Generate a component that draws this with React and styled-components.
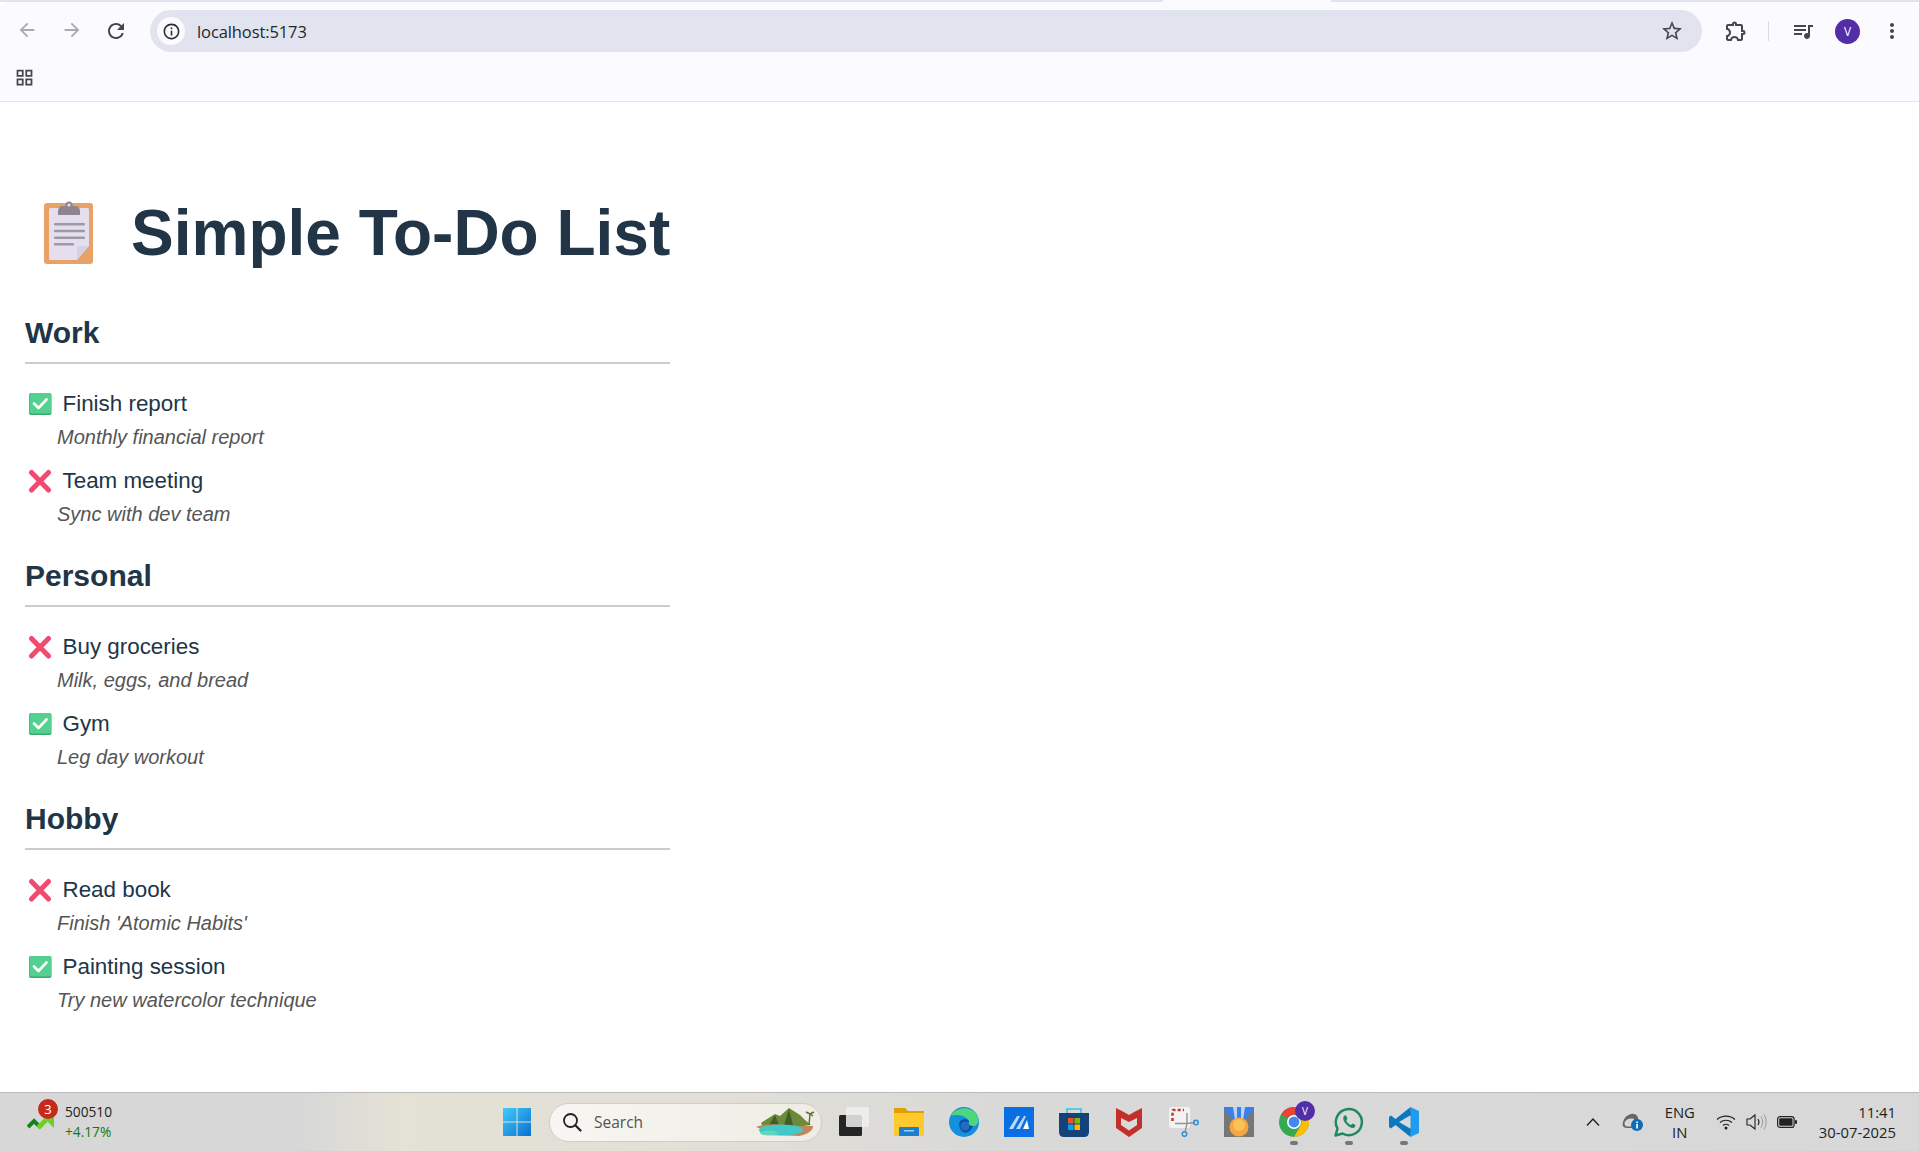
import React from "react";
import styled, { createGlobalStyle } from "styled-components";
import {
  MdArrowBack,
  MdArrowForward,
  MdRefresh,
  MdInfoOutline,
  MdStarBorder,
  MdOutlineExtension,
  MdQueueMusic,
  MdMoreVert,
  MdOutlineGridView,
} from "react-icons/md";

const GlobalStyle = createGlobalStyle`
  html, body { margin: 0; padding: 0; background: #fff; }
  body { font-family: "Liberation Sans", Arial, sans-serif; color: #213547; }
`;

const Screen = styled.div`
  height: 1151px;
  display: flex;
  flex-direction: column;
  overflow: hidden;
`;

/* browser chrome */
const TabStrip = styled.div`
  height: 2px;
  background: linear-gradient(90deg, #e1e4ef 0 1163px, #fafaff 1163px 1331px, #e1e4ef 1331px);
`;
const Toolbar = styled.div`
  height: 58px;
  background: #fafaff;
  border-radius: 8px 8px 0 0;
  display: flex;
  align-items: center;
  position: relative;
`;
const NavBtn = styled.span`
  width: 44.5px;
  display: flex;
  justify-content: center;
  color: ${(p) => (p.$off ? "#a9abb3" : "#44474f")};
  font-size: ${(p) => p.$size || 22}px;
`;
const NavGroup = styled.div`
  display: flex;
  padding-left: 5px;
  width: 150px;
  box-sizing: border-box;
`;
const AddressBar = styled.div`
  width: 1552px;
  height: 42px;
  border-radius: 21px;
  background: #e1e4ef;
  display: flex;
  align-items: center;
  padding: 0 18px 0 7px;
  box-sizing: border-box;
`;
const InfoChip = styled.span`
  width: 28px;
  height: 28px;
  border-radius: 50%;
  background: #fafaff;
  display: flex;
  align-items: center;
  justify-content: center;
  font-size: 19px;
  color: #2a2c31;
`;
const UrlText = styled.span`
  font-family: "Open Sans", sans-serif;
  font-size: 16.5px;
  color: #24262b;
  margin-left: 12px;
  letter-spacing: -0.1px;
  flex: 1;
`;
const StarBtn = styled.span`
  font-size: 24px;
  color: #44474f;
  display: flex;
`;
const ToolIcons = styled.div`
  display: flex;
  align-items: center;
  font-size: 24px;
  color: #44474f;
  flex: 1;
  padding-left: 22px;
  svg { display: block; }
`;
const ToolSep = styled.span`
  width: 1px;
  height: 20px;
  background: #d3dcf0;
  margin: 0 22px 0 20px;
`;
const Avatar = styled.span`
  width: 25px;
  height: 25px;
  border-radius: 50%;
  background: #512da8;
  color: #fff;
  font-family: "Open Sans", sans-serif;
  font-size: 12px;
  display: flex;
  align-items: center;
  justify-content: center;
  margin: 0 20px 0 20px;
`;
const BookmarkBar = styled.div`
  height: 42px;
  box-sizing: border-box;
  background: #fafaff;
  border-bottom: 1px solid #e4e5ec;
  padding: 0 0 6px 14px;
  display: flex;
  align-items: center;
  font-size: 21px;
  color: #44474f;
`;

/* page */
const Main = styled.main`
  flex: 1;
  padding: 94px 0 0 25px;
`;
const Column = styled.div`
  width: 645px;
`;
const Title = styled.h1`
  margin: 0 0 46px;
  font-size: 64px;
  line-height: 74px;
  font-weight: 700;
  color: #213547;
  display: flex;
  align-items: center;
  white-space: nowrap;
`;
const TitleIcon = styled.svg`
  width: 64px;
  height: 64px;
  margin: -2px 31px 0 11px;
  flex: none;
`;
const Section = styled.section`
  margin-bottom: 35.5px;
`;
const SectionName = styled.h2`
  margin: 0;
  font-size: 30px;
  line-height: 34px;
  font-weight: 700;
  color: #213547;
  padding-bottom: 12px;
  border-bottom: 2px solid #ccc;
`;
const TaskList = styled.ul`
  list-style: none;
  margin: 27px 0 0;
  padding: 0;
  display: flex;
  flex-direction: column;
  gap: 20.5px;
`;
const TaskRow = styled.li`
  display: block;
`;
const TaskTitle = styled.div`
  display: flex;
  align-items: center;
  gap: 10.5px;
  font-size: 22.4px;
  line-height: 26px;
  color: #213547;
  padding-left: 3px;
`;
const TaskNote = styled.div`
  margin: 10px 0 0 32px;
  font-size: 20px;
  line-height: 20px;
  font-style: italic;
  color: #555;
`;

/* taskbar */
const Taskbar = styled.footer`
  height: 59px;
  box-sizing: border-box;
  border-top: 1px solid #b9b9b9;
  background: linear-gradient(90deg, #d7d7d7 0 300px, #e4e1d5 400px, #e1dfd7 720px, #d9d9d8 1000px, #d8d8d8);
  display: grid;
  grid-template-columns: 502px auto 1fr;
  align-items: center;
  position: relative;
`;
const Widget = styled.div`
  display: flex;
  align-items: center;
  padding-left: 27px;
  gap: 10px;
  position: relative;
  font-family: "Open Sans", sans-serif;
  font-size: 13.7px;
  line-height: 20px;
  color: #222;
`;
const WidgetBadge = styled.span`
  position: absolute;
  left: 38px;
  top: -3px;
  width: 20px;
  height: 20px;
  border-radius: 50%;
  background: #c42b1c;
  color: #fff;
  font-size: 13px;
  display: flex;
  align-items: center;
  justify-content: center;
`;
const Gain = styled.div`
  color: #117a11;
`;
const Tray = styled.div`
  display: flex;
  align-items: center;
  gap: 25px;
`;
const AppIcon = styled.span`
  width: 30px;
  height: 30px;
  display: block;
  position: relative;
  svg { display: block; }
  &::after {
    content: "";
    display: ${(p) => (p.$running ? "block" : "none")};
    position: absolute;
    left: 11px;
    bottom: -8px;
    width: 8px;
    height: 4px;
    border-radius: 2px;
    background: #777;
  }
`;
const SearchPill = styled.div`
  width: 273px;
  height: 39px;
  box-sizing: border-box;
  margin: 0 -8px 0 -8px;
  border-radius: 20px;
  border: 1px solid #cfcdc4;
  background: linear-gradient(90deg, #f7f6f2, #eeece4);
  display: flex;
  align-items: center;
  padding: 0 4px 0 12px;
  font-family: "Open Sans", sans-serif;
  font-size: 15.5px;
  color: #555;
`;
const SearchLabel = styled.span`
  flex: 1;
  margin-left: 12px;
`;
const SystemTray = styled.div`
  display: flex;
  align-items: center;
  justify-content: flex-end;
  padding-right: 23px;
  font-family: "Open Sans", sans-serif;
  font-size: 14.8px;
  color: #222;
  svg { display: block; }
`;
const Lang = styled.div`
  text-align: center;
  line-height: 20px;
  margin: 0 21px 0 21px;
`;
const Clock = styled.div`
  text-align: right;
  line-height: 20px;
  margin-left: 22px;
`;
const TrayGap = styled.span`
  display: block;
  margin-left: ${(p) => p.$left || 0}px;
`;

const sections = [
  { name: "Work", tasks: [
    { title: "Finish report", note: "Monthly financial report", done: true },
    { title: "Team meeting", note: "Sync with dev team", done: false },
  ] },
  { name: "Personal", tasks: [
    { title: "Buy groceries", note: "Milk, eggs, and bread", done: false },
    { title: "Gym", note: "Leg day workout", done: true },
  ] },
  { name: "Hobby", tasks: [
    { title: "Read book", note: "Finish 'Atomic Habits'", done: false },
    { title: "Painting session", note: "Try new watercolor technique", done: true },
  ] },
];

const ClipboardIcon = () => (
  <TitleIcon viewBox="0 0 64 64">
    <rect x="8" y="3" width="49" height="61" rx="3" fill="#e8a263" />
    <rect x="13" y="8" width="40" height="52" rx="1.5" fill="#e4deef" />
    <path d="M41 60 L53 46 L53 58.5 Q53 60 51.5 60 Z" fill="#e8a263" />
    <path d="M41 60 L41 49 Q41 46 44 46 L53 46 Z" fill="#d5d0e2" />
    <path d="M22 12 Q22 6.500 26 6 L29 6 Q29.500 1.500 33 1.500 Q36.500 1.500 37 6 L40 6 Q44 6.500 44 12 L44 15 L22 15 Z" fill="#8e8590" />
    <circle cx="33" cy="5" r="1.6" fill="#e4deef" />
    <rect x="18" y="23" width="31" height="2.500" rx="1" fill="#9d97a6" />
    <rect x="18" y="29.700" width="31" height="2.500" rx="1" fill="#9d97a6" />
    <rect x="18" y="36.400" width="31" height="2.500" rx="1" fill="#9d97a6" />
    <rect x="18" y="43.100" width="20" height="2.500" rx="1" fill="#9d97a6" />
  </TitleIcon>
);

const StatusIcon = ({ done }) =>
  done ? (
    <svg width="24" height="24" viewBox="0 0 24 24" style={{ flex: "none" }}>
      <rect x="1" y="1" width="22.500" height="22" rx="2" fill="#3fa873" />
      <rect x="1.500" y="1" width="21.500" height="20.500" rx="2" fill="#54d18f" />
      <path d="M6 11.500 L10.500 16 L18.500 7.500" fill="none" stroke="#fff" strokeWidth="2.600" strokeLinecap="round" strokeLinejoin="round" />
    </svg>
  ) : (
    <svg width="24" height="24" viewBox="0 0 24 24" style={{ flex: "none" }}>
      <path d="M3.500 3.500 L20.500 21 M20.500 3.500 L3.500 21" stroke="#f2496f" strokeWidth="5" strokeLinecap="round" />
    </svg>
  );

const Task = ({ title, note, done }) => (
  <TaskRow>
    <TaskTitle>
      <StatusIcon done={done} />
      {title}
    </TaskTitle>
    <TaskNote>{note}</TaskNote>
  </TaskRow>
);

const StartIcon = () => (
  <svg width="30" height="30" viewBox="0 0 30 30">
    <defs>
      <linearGradient id="win" x1="0" y1="0" x2="1" y2="1">
        <stop offset="0" stopColor="#3fcdfb" />
        <stop offset="1" stopColor="#0b6fd0" />
      </linearGradient>
    </defs>
    <path d="M1 1 H14.500 V14.500 H1 Z M15.500 1 H29 V14.500 H15.500 Z M1 15.500 H14.500 V29 H1 Z M15.500 15.500 H29 V29 H15.500 Z" fill="url(#win)" />
  </svg>
);
const TaskViewIcon = () => (
  <svg width="30" height="30" viewBox="0 0 30 30">
    <rect x="0" y="8" width="23" height="21" rx="1.500" fill="#252525" />
    <rect x="7" y="0" width="23" height="20" rx="1.500" fill="#f0f0ee" fillOpacity="0.85" />
  </svg>
);
const FolderIcon = () => (
  <svg width="30" height="30" viewBox="0 0 30 30">
    <path d="M0 2 Q0 1 1 1 H11 L14 4 H30 V10 H0 Z" fill="#e0a100" />
    <path d="M0 6 H30 V29 H0 Z" fill="#fdc92f" />
    <rect x="5" y="20" width="20" height="9" rx="1" fill="#1b7fd0" />
    <rect x="10" y="23" width="10" height="1.500" fill="#fff" fillOpacity="0.6" />
  </svg>
);
const EdgeIcon = () => (
  <svg width="30" height="30" viewBox="0 0 30 30">
    <circle cx="15" cy="15" r="15" fill="#1490df" />
    <path d="M2 9 C6 0 22 -2 28 8 C31 13 29 19 24 19 C19 19 19 16 20 14 C17 8 7 7 2 9 Z" fill="#4fd67a" />
    <path d="M10 18 C10 12 17 10 20 14 C19 16 19 19 24 19 C20 28 12 28 10 18 Z" fill="#0b4f9e" />
    <circle cx="16" cy="19" r="4.500" fill="#1c6fc4" />
  </svg>
);
const AppTileIcon = () => (
  <svg width="30" height="30" viewBox="0 0 30 30">
    <rect width="30" height="30" fill="#0a6fe3" />
    <path d="M5 22 L13 9 H16 L9 22 Z M12 22 L20 9 H22 L16 22 Z" fill="#bcd9f8" />
    <path d="M19 22 L23 13 L25 22 Z" fill="#fff" />
  </svg>
);
const StoreIcon = () => (
  <svg width="30" height="30" viewBox="0 0 30 30">
    <path d="M8 7 V2 H22 V7" fill="none" stroke="#35c1ee" strokeWidth="1.600" />
    <path d="M0 6 H30 V25 Q30 30 25 30 H5 Q0 30 0 25 Z" fill="#14427a" />
    <rect x="9" y="11" width="5.500" height="5.500" fill="#f25022" />
    <rect x="15.500" y="11" width="5.500" height="5.500" fill="#7fba00" />
    <rect x="9" y="17.500" width="5.500" height="5.500" fill="#00a4ef" />
    <rect x="15.500" y="17.500" width="5.500" height="5.500" fill="#ffb900" />
  </svg>
);
const ShieldIcon = () => (
  <svg width="30" height="30" viewBox="0 0 30 30">
    <path d="M2 1 L9 4.500 L15 8 L21 4.500 L28 1 V21 L15 30 L2 21 Z M7 11 V18 L15 23.500 L23 18 V11 L15 15 Z" fill="#c3302a" fillRule="evenodd" />
  </svg>
);
const SnipIcon = () => (
  <svg width="30" height="30" viewBox="0 0 30 30">
    <rect x="0" y="0" width="21" height="21" rx="3" fill="#f2f2f2" />
    <path d="M3.500 14 V4 Q3.500 3 4.500 3 H15" fill="none" stroke="#c8361f" strokeWidth="2.500" strokeDasharray="3 2.200" />
    <path d="M6 16.500 H18 L26 15.500 M18 6 V17 L16 25" fill="none" stroke="#8f9498" strokeWidth="1.400" />
    <circle cx="27" cy="15.500" r="2.300" fill="none" stroke="#2d8fd6" strokeWidth="1.500" />
    <circle cx="15.500" cy="27" r="2.300" fill="none" stroke="#2d8fd6" strokeWidth="1.500" />
  </svg>
);
const MedalIcon = () => (
  <svg width="30" height="30" viewBox="0 0 30 30">
    <rect width="30" height="30" fill="#777" />
    <path d="M0 0 H30 V3 L20 14 H10 L0 3 Z" fill="#3d7fe6" />
    <path d="M9 0 H13 V13 H11 Z M17 0 H21 L19 13 H17 Z" fill="#b8d4fb" />
    <circle cx="15" cy="20" r="9.500" fill="#f6a63c" />
    <circle cx="15" cy="18" r="6" fill="#fbc25a" />
  </svg>
);
const ChromeIcon = () => (
  <svg width="30" height="30" viewBox="0 0 30 30">
    <circle cx="15" cy="15" r="15" fill="#34a853" />
    <path d="M15 0 A15 15 0 0 1 28 7.500 L15 7.500 A7.500 7.500 0 0 0 8.500 11.200 L2 7.500 A15 15 0 0 1 15 0 Z" fill="#ea4335" />
    <path d="M28 7.500 A15 15 0 0 1 15 30 L21.500 18.750 A7.500 7.500 0 0 0 21.500 11.200 Z" fill="#fbbc04" />
    <circle cx="15" cy="15" r="7" fill="#fff" />
    <circle cx="15" cy="15" r="5.400" fill="#4285f4" />
  </svg>
);
const ProfileDot = styled.span`
  position: absolute;
  right: -6px;
  top: -6px;
  width: 20px;
  height: 20px;
  border-radius: 50%;
  background: #512da8;
  color: #fff;
  font-family: "Open Sans", sans-serif;
  font-size: 10px;
  display: flex;
  align-items: center;
  justify-content: center;
`;
const WhatsAppIcon = () => (
  <svg width="30" height="30" viewBox="0 0 30 30">
    <path d="M1.500 28.500 L3.500 21.500 A13 13 0 1 1 8.500 26.500 Z" fill="none" stroke="#1f8a5b" strokeWidth="2.500" strokeLinejoin="round" />
    <path d="M10.500 8.500 C8.500 10 9 13.500 12 17 C15 20.500 19 22 21 20 L21.500 18 L18.500 16.500 L17 18 C15 17.500 12.800 15 12.300 13.200 L13.500 11.800 L12.200 8.500 Z" fill="#1f8a5b" />
  </svg>
);
const VSCodeIcon = () => (
  <svg width="30" height="30" viewBox="0 0 30 30">
    <path d="M21.500 0 L30 4 V26 L21.500 30 Z" fill="#1f9cf0" />
    <path d="M21.500 0 L22 8 L10 15 L22 22 L21.500 30 L6.500 18 L2 21.500 L0 20 V10 L2 8.500 L6.500 12 Z" fill="#0a77c0" />
  </svg>
);
const IslandArt = () => (
  <svg width="62" height="30" viewBox="0 0 62 30">
    <path d="M6 16 L20 7 L25 9 L34 1 L45 8 L50 13 L56 18 L40 20 L8 20 Z" fill="#6c8a3a" />
    <path d="M20 8 L24 18 L14 18 Z M34 2 L38 18 L29 18 Z" fill="#3f5f2a" />
    <path d="M54 18 L55 7 M55 7 L51 5 M55 7 L59 5 M55 7 L58 9" stroke="#5d6f2a" strokeWidth="1.400" fill="none" />
    <path d="M1 20 Q14 15 40 19 Q52 19 58 19 Q58 26 44 29 L22 28 Z" fill="#c0875a" />
    <ellipse cx="26" cy="23" rx="22" ry="5.500" fill="#44c7c9" />
    <ellipse cx="14" cy="26" rx="9" ry="2.500" fill="#62d7bd" />
  </svg>
);
const CloudInfoIcon = () => (
  <svg width="22" height="20" viewBox="0 0 22 20">
    <path d="M5 16 C1 16 0 13 1 10 C2 7 3 4 9 2 C14 1 17 5 16 9 L11 16 Z" fill="#666" />
    <path d="M5 14.500 C2.500 14 2 11.500 3 9.500 C5 7 8 6 12 7 L10 14.500 Z" fill="#d8d8d8" />
    <circle cx="15" cy="13" r="6" fill="#0f6cbd" />
    <rect x="14.200" y="12" width="1.700" height="4.500" fill="#fff" />
    <rect x="14.200" y="9.500" width="1.700" height="1.700" fill="#fff" />
  </svg>
);
const ChevronIcon = () => (
  <svg width="16" height="10" viewBox="0 0 16 10">
    <path d="M2 8.500 L8 2 L14 8.500" fill="none" stroke="#222" strokeWidth="1.400" />
  </svg>
);
const WifiIcon = () => (
  <svg width="20" height="16" viewBox="0 0 20 16">
    <path d="M1 5.500 C6 1 14 1 19 5.500 M4 8.500 C7.500 5.500 12.500 5.500 16 8.500 M7 11.500 C8.800 10 11.200 10 13 11.500" fill="none" stroke="#222" strokeWidth="1.200" />
    <circle cx="10" cy="14" r="1.500" fill="#222" />
  </svg>
);
const SpeakerIcon = () => (
  <svg width="21" height="18" viewBox="0 0 21 18">
    <path d="M1 6 H4 L9 2 V16 L4 12 H1 Z" fill="none" stroke="#222" strokeWidth="1.100" />
    <path d="M12 6 Q14 9 12 12" fill="none" stroke="#222" strokeWidth="1.100" />
    <path d="M15 3.500 Q18.500 9 15 14.500 M18 1.500 Q22.500 9 18 16.500" fill="none" stroke="#999" strokeWidth="1" />
  </svg>
);
const BatteryIcon = () => (
  <svg width="20" height="12" viewBox="0 0 20 12">
    <rect x="0.600" y="0.600" width="16.500" height="10.800" rx="2.500" fill="none" stroke="#222" strokeWidth="1.200" />
    <rect x="2.200" y="2.200" width="13.300" height="7.600" rx="1.200" fill="#222" />
    <rect x="18" y="4" width="2" height="4" rx="1" fill="#222" />
  </svg>
);
const SearchGlass = () => (
  <svg width="20" height="20" viewBox="0 0 20 20">
    <circle cx="8.500" cy="8.500" r="6.500" fill="none" stroke="#222" strokeWidth="1.800" />
    <path d="M13.300 13.300 L18.500 18.500" stroke="#222" strokeWidth="2.200" strokeLinecap="round" />
  </svg>
);
const TrendIcon = () => (
  <svg width="28" height="17" viewBox="0 0 28 17">
    <path d="M1 13 L7 7 L12 12" fill="none" stroke="#17821b" strokeWidth="4" />
    <path d="M11 14 L19 6" fill="none" stroke="#6ecf28" strokeWidth="5" />
    <path d="M14 1 H27 V14 Z" fill="#6ecf28" />
  </svg>
);

export default function App() {
  return (
    <Screen>
      <GlobalStyle />
      <TabStrip />
      <Toolbar>
        <NavGroup>
          <NavBtn $off><MdArrowBack /></NavBtn>
          <NavBtn $off><MdArrowForward /></NavBtn>
          <NavBtn $size={24}><MdRefresh /></NavBtn>
        </NavGroup>
        <AddressBar>
          <InfoChip><MdInfoOutline /></InfoChip>
          <UrlText>localhost:5173</UrlText>
          <StarBtn><MdStarBorder /></StarBtn>
        </AddressBar>
        <ToolIcons>
          <MdOutlineExtension />
          <ToolSep />
          <MdQueueMusic />
          <Avatar>V</Avatar>
          <MdMoreVert />
        </ToolIcons>
      </Toolbar>
      <BookmarkBar><MdOutlineGridView /></BookmarkBar>

      <Main>
        <Column>
          <Title><ClipboardIcon />Simple To-Do List</Title>
          {sections.map((s) => (
            <Section key={s.name}>
              <SectionName>{s.name}</SectionName>
              <TaskList>
                {s.tasks.map((t) => <Task key={t.title} {...t} />)}
              </TaskList>
            </Section>
          ))}
        </Column>
      </Main>

      <Taskbar>
        <Widget>
          <TrendIcon />
          <WidgetBadge>3</WidgetBadge>
          <div>
            <div>500510</div>
            <Gain>+4.17%</Gain>
          </div>
        </Widget>
        <Tray>
          <AppIcon><StartIcon /></AppIcon>
          <SearchPill>
            <SearchGlass />
            <SearchLabel>Search</SearchLabel>
            <IslandArt />
          </SearchPill>
          <AppIcon><TaskViewIcon /></AppIcon>
          <AppIcon><FolderIcon /></AppIcon>
          <AppIcon><EdgeIcon /></AppIcon>
          <AppIcon><AppTileIcon /></AppIcon>
          <AppIcon><StoreIcon /></AppIcon>
          <AppIcon><ShieldIcon /></AppIcon>
          <AppIcon><SnipIcon /></AppIcon>
          <AppIcon><MedalIcon /></AppIcon>
          <AppIcon $running><ChromeIcon /><ProfileDot>V</ProfileDot></AppIcon>
          <AppIcon $running><WhatsAppIcon /></AppIcon>
          <AppIcon $running><VSCodeIcon /></AppIcon>
        </Tray>
        <SystemTray>
          <ChevronIcon />
          <TrayGap $left={21}><CloudInfoIcon /></TrayGap>
          <Lang>ENG<br />IN</Lang>
          <WifiIcon />
          <TrayGap $left={10}><SpeakerIcon /></TrayGap>
          <TrayGap $left={10}><BatteryIcon /></TrayGap>
          <Clock>11:41<br />30-07-2025</Clock>
        </SystemTray>
      </Taskbar>
    </Screen>
  );
}
